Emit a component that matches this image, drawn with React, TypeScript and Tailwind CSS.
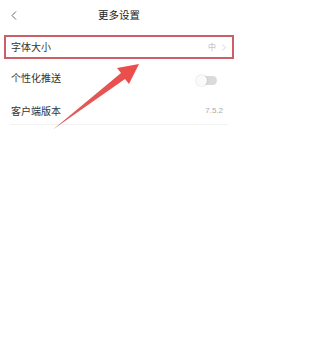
import React from "react";

const font = { fontFamily: '"Noto Sans CJK SC", "Noto Sans", sans-serif' };

function Toggle() {
  return (
    <div className="relative h-[9px] w-[20px] rounded-full bg-[#dadada]">
      <span className="absolute left-[-1px] top-[-1px] h-[11px] w-[11px] rounded-full bg-[#fafafa] shadow-[0_0_2px_rgba(0,0,0,0.2)]" />
    </div>
  );
}

function Arrow() {
  return (
    <svg className="pointer-events-none absolute left-0 top-0" width="238" height="339" viewBox="0 0 238 339">
      <defs>
        <linearGradient id="arr" x1="53" y1="129" x2="139" y2="64" gradientUnits="userSpaceOnUse">
          <stop offset="0" stopColor="#d8625f" />
          <stop offset="1" stopColor="#ee4b49" />
        </linearGradient>
      </defs>
      <polygon
        points="53,129.5 121,73 117,68 139,64 129,84 125,79"
        fill="url(#arr)"
      />
    </svg>
  );
}

export default function App() {
  return (
    <div className="relative h-[339px] w-[238px] overflow-hidden bg-white text-[#333]" style={font}>
      {/* Header */}
      <div className="relative flex h-[35px] items-start justify-center pt-[8px]">
        <svg className="absolute left-[11px] top-[11px]" width="6" height="9" viewBox="0 0 6 9">
          <path d="M5 0.5 L1 4.5 L5 8.5" fill="none" stroke="#666" strokeWidth="1" />
        </svg>
        <span className="text-[10.5px] leading-[14px] text-[#222]">更多设置</span>
      </div>

      {/* Font size row, highlighted */}
      <div className="mx-[4px] flex h-[24px] items-center justify-between border-2 border-[#cb5e66] pl-[5px] pr-[6px]">
        <span className="text-[10px] leading-none">字体大小</span>
        <div className="flex items-center gap-[6px] text-[#b8b8b8]">
          <span className="text-[8px] leading-none">中</span>
          <svg width="4" height="7" viewBox="0 0 4 7">
            <path d="M0.5 0.5 L3.3 3.5 L0.5 6.5" fill="none" stroke="#d4d4d4" strokeWidth="0.9" />
          </svg>
        </div>
      </div>

      {/* Push row */}
      <div className="flex h-[38px] items-center justify-between pl-[11px] pr-[21px]">
        <span className="text-[10px] leading-none">个性化推送</span>
        <div className="mt-[4px]">
          <Toggle />
        </div>
      </div>

      {/* Version row */}
      <div className="mx-[10px] flex h-[28px] items-center justify-between border-b border-[#f2f2f2] pl-[1px] pr-[5px]">
        <span className="text-[10px] leading-none">客户端版本</span>
        <span className="text-[8px] leading-none text-[#aaa]" style={{ fontFamily: '"Liberation Sans", sans-serif' }}>
          7.5.2
        </span>
      </div>

      <Arrow />
    </div>
  );
}
